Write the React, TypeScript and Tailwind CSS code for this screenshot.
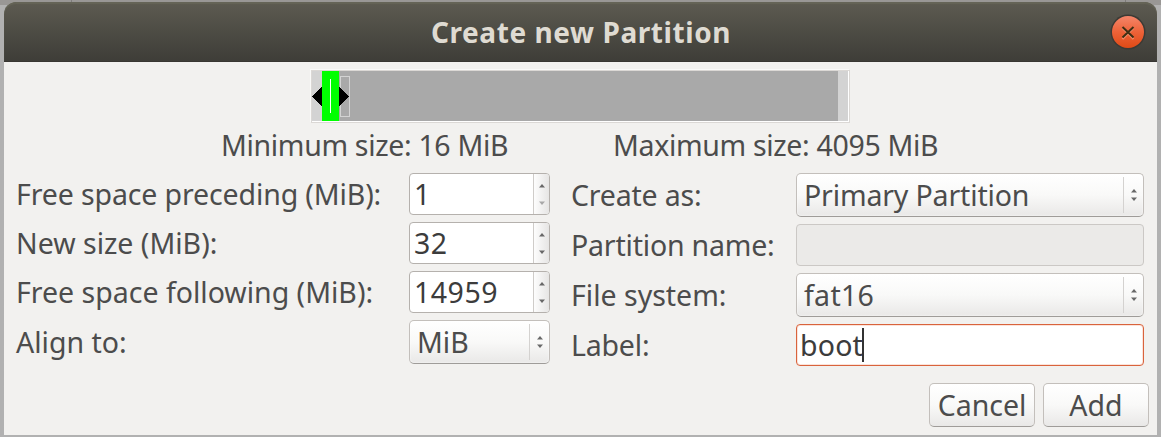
import type { ReactNode } from "react";

function Arrows({ gap, dimDown = false }: { gap: number; dimDown?: boolean }) {
  const h = gap + 8;
  return (
    <svg width="6" height={h} viewBox={`0 0 6 ${h}`} className="shrink-0">
      <path d="M0 3.4 L3 0 L6 3.4Z" fill="#686868" />
      <path d={`M0 ${h - 3.4} L3 ${h} L6 ${h - 3.4}Z`} fill={dimDown ? "#a8a8a8" : "#686868"} />
    </svg>
  );
}

function Label({ children, className = "" }: { children: ReactNode; className?: string }) {
  return <div className={`flex h-[42px] items-center whitespace-nowrap leading-none ${className}`}><span>{children}</span></div>;
}

function Spin({ value, dimDown }: { value: string; dimDown?: boolean }) {
  return (
    <div className="flex h-[42px] w-[141px] overflow-hidden rounded-[4px] border border-[#b5b1ad] bg-white text-[#3c3c3c]">
      <div className="flex flex-1 items-center pl-1 leading-none tracking-[0.5px]">{value}</div>
      <div className="flex w-[16px] items-center justify-center border-l border-[#cfccc9] bg-linear-to-r from-[#fdfdfd] to-[#e6e5e4]">
        <Arrows gap={13} dimDown={dimDown} />
      </div>
    </div>
  );
}

function Combo({ value, className = "" }: { value: ReactNode; className?: string }) {
  return (
    <div className={`flex h-[44px] items-center rounded-[5px] border border-[#c3bfbb] border-b-[#9f9c99] bg-linear-to-b from-white via-[#f9f9f8] to-[#e9e8e7] shadow-[inset_0_0_2px_#ffffff] ${className}`}>
      <div className="flex-1 whitespace-nowrap pl-[7px] leading-none">{value}</div>
      <div className="flex h-9 w-[20px] items-center justify-center border-l border-[#d4d2d0]">
        <Arrows gap={4} />
      </div>
    </div>
  );
}

function Button({ children }: { children: ReactNode }) {
  return (
    <button className="flex h-[44px] w-[106px] items-center justify-center rounded-[5px] border border-[#c3bfbb] border-b-[#9f9c99] bg-linear-to-b from-white via-[#f9f9f8] to-[#e9e8e7] leading-none">
      {children}
    </button>
  );
}

export default function App() {
  return (
    <div className="h-[437px] w-[1161px] overflow-hidden bg-[#b1b1b1] bg-linear-to-b from-[#999795] from-[5px] to-[#b1b1b1] to-[5px] font-['Noto_Sans',sans-serif] text-[28.5px] text-[#4c4c4c]">
      <div className="flex h-[2px] justify-between pl-[71px] pr-[35px]">
        <span className="w-px bg-[#7e7c7a]" />
        <span className="w-px bg-[#7e7c7a]" />
      </div>
      <div className="ml-1 h-[433px] w-[1153px] rounded-t-[12px] bg-[#f2f1ef]">
        <header className="flex h-[60px] items-center rounded-t-[12px] border-b border-[#383632] bg-linear-to-b from-[#5d5b51] to-[#3e3d38] pl-[48px] pr-[11px] shadow-[inset_0_2px_1px_#656457]">
          <h1 className="flex-1 text-center text-[28px] font-bold leading-none tracking-[0.57px] text-[#dfdbd2]"><span>Create new Partition</span></h1>
          <svg width="36" height="36" viewBox="0 0 36 36">
            <defs>
              <linearGradient id="close" x1="0" y1="0" x2="0" y2="1">
                <stop offset="0" stopColor="#f5866a" />
                <stop offset=".5" stopColor="#ed6238" />
                <stop offset="1" stopColor="#df4a16" />
              </linearGradient>
            </defs>
            <circle cx="18" cy="18" r="17.5" fill="#3c3a35" />
            <circle cx="18" cy="18" r="16" fill="url(#close)" />
            <path d="M12.5 14 L23.5 25 M23.5 14 L12.5 25" stroke="#f5906c" strokeWidth="2" />
            <path d="M12.5 13 L23.5 23.5 M23.5 13 L12.5 23.5" stroke="#3e2f14" strokeWidth="2" />
          </svg>
        </header>

        <div className="ml-[307px] mt-[8px] h-[53px] w-[539px] border border-[#dbd8d5] bg-white pb-px pr-px shadow-[-1px_-1px_0_#fafaf9]">
          <svg width="536" height="50" viewBox="0 0 536 50" shapeRendering="crispEdges">
            <rect width="536" height="50" fill="#d3d3d3" />
            <rect x="10" width="516" height="50" fill="#a9a9a9" />
            <rect x="10" width="17" height="50" fill="#00ff00" />
            <rect x="18" y="8" width="1" height="34" fill="#ffffff" />
            <rect x="28.5" y="5.5" width="9" height="40" fill="none" stroke="#d3d3d3" />
            <path d="M0 25.5 L10 15.5 V35.5Z M37 25.5 L27 15.5 V35.5Z" fill="#000000" />
          </svg>
        </div>

        <div className="flex h-[50px] pl-[217px] pt-px tracking-[-0.33px]">
          <Label className="w-[392px]">Minimum size: 16 MiB</Label>
          <Label>Maximum size: 4095 MiB</Label>
        </div>

        <div className="flex h-[210px] pl-[12px]">
          <div className="grid w-[393px] content-start gap-[7px]">
            <Label className="tracking-[-0.12px]">Free space preceding (MiB):</Label>
            <Label>New size (MiB):</Label>
            <Label>Free space following (MiB):</Label>
            <Label className="pt-[2px]">Align to:</Label>
          </div>
          <div className="grid w-[162px] content-start gap-[7px]">
            <Spin value="1" dimDown />
            <Spin value="32" />
            <Spin value="14959" />
            <Combo value="MiB" className="w-[141px]" />
          </div>
          <div className="grid w-[225px] content-start gap-[8px] pt-px tracking-[-0.2px]">
            <Label>Create as:</Label>
            <Label>Partition name:</Label>
            <Label className="tracking-normal">File system:</Label>
            <Label>Label:</Label>
          </div>
          <div className="grid w-[348px] content-start gap-[7px]">
            <Combo value={<span className="tracking-[-0.15px]">Primary Partition</span>} />
            <div className="h-[42px] rounded-[4px] border border-[#cbc8c5] bg-[#ebeae8]" />
            <Combo value={<span className="tracking-[0.3px]">fat16</span>} />
            <div className="flex h-[42px] items-center rounded-[4px] border border-[#d9633c] bg-white pl-[3px] leading-none text-[#3c3c3c] shadow-[inset_0_0_0_1px_#fbe3da]">
              <span className="tracking-[0.2px]">boot</span>
              <span className="-ml-px h-[34px] w-[2px] bg-[#333333]" />
            </div>
          </div>
        </div>

        <div className="flex justify-end gap-2 pr-2">
          <Button>Cancel</Button>
          <Button>Add</Button>
        </div>
      </div>
    </div>
  );
}
